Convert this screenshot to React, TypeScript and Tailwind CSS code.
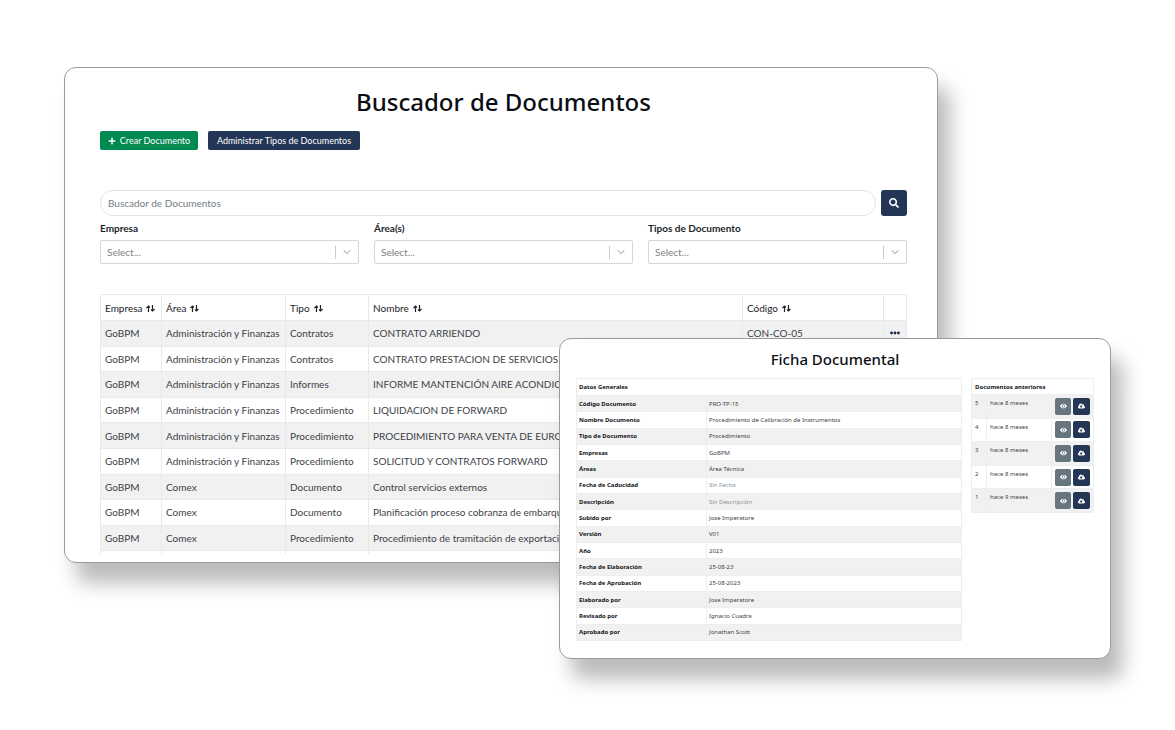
import { useState } from 'react';
import { FaCloudDownloadAlt, FaEllipsisH, FaEye, FaPlus, FaSearch } from 'react-icons/fa';

const filtros = [
  { id: 'empresa', label: 'Empresa' },
  { id: 'areas', label: 'Área(s)' },
  { id: 'tipos', label: 'Tipos de Documento' }
];

const columnas = ['Empresa', 'Área', 'Tipo', 'Nombre', 'Código'];

const documentos = [
  { empresa: 'GoBPM', area: 'Administración y Finanzas', tipo: 'Contratos', nombre: 'CONTRATO ARRIENDO', codigo: 'CON-CO-05' },
  { empresa: 'GoBPM', area: 'Administración y Finanzas', tipo: 'Contratos', nombre: 'CONTRATO PRESTACION DE SERVICIOS CONTABLES', codigo: '' },
  { empresa: 'GoBPM', area: 'Administración y Finanzas', tipo: 'Informes', nombre: 'INFORME MANTENCIÓN AIRE ACONDICIONADO', codigo: '' },
  { empresa: 'GoBPM', area: 'Administración y Finanzas', tipo: 'Procedimiento', nombre: 'LIQUIDACION DE FORWARD', codigo: '' },
  { empresa: 'GoBPM', area: 'Administración y Finanzas', tipo: 'Procedimiento', nombre: 'PROCEDIMIENTO PARA VENTA DE EUROS', codigo: '' },
  { empresa: 'GoBPM', area: 'Administración y Finanzas', tipo: 'Procedimiento', nombre: 'SOLICITUD Y CONTRATOS FORWARD', codigo: '' },
  { empresa: 'GoBPM', area: 'Comex', tipo: 'Documento', nombre: 'Control servicios externos', codigo: '' },
  { empresa: 'GoBPM', area: 'Comex', tipo: 'Documento', nombre: 'Planificación proceso cobranza de embarques', codigo: '' },
  { empresa: 'GoBPM', area: 'Comex', tipo: 'Procedimiento', nombre: 'Procedimiento de tramitación de exportaciones', codigo: '' }
];

const datosGenerales = [
  { campo: 'Código Documento', valor: 'PRO-TP-15' },
  { campo: 'Nombre Documento', valor: 'Procedimiento de Calibración de Instrumentos' },
  { campo: 'Tipo de Documento', valor: 'Procedimiento' },
  { campo: 'Empresas', valor: 'GoBPM' },
  { campo: 'Áreas', valor: 'Área Técnica' },
  { campo: 'Fecha de Caducidad', valor: 'Sin Fecha', vacio: true },
  { campo: 'Descripción', valor: 'Sin Descripción', vacio: true },
  { campo: 'Subido por', valor: 'Jose Imperatore' },
  { campo: 'Versión', valor: 'V01' },
  { campo: 'Año', valor: '2023' },
  { campo: 'Fecha de Elaboración', valor: '25-08-23' },
  { campo: 'Fecha de Aprobación', valor: '25-08-2023' },
  { campo: 'Elaborado por', valor: 'Jose Imperatore' },
  { campo: 'Revisado por', valor: 'Ignacio Cuadra' },
  { campo: 'Aprobado por', valor: 'Jonathan Scott' }
];

const versiones = [
  { numero: 5, fecha: 'hace 8 meses' },
  { numero: 4, fecha: 'hace 8 meses' },
  { numero: 3, fecha: 'hace 8 meses' },
  { numero: 2, fecha: 'hace 8 meses' },
  { numero: 1, fecha: 'hace 9 meses' }
];

function IconoOrden() {
  return (
    <svg viewBox="0 0 18 14" className="mt-px h-[7px] w-[9px] shrink-0" fill="none" stroke="currentColor" strokeWidth="2.4" aria-hidden="true">
      <path d="M5 14V2M1 6l4-4 3 3" />
      <path d="M13 0v12M10 9l3 3 4-4" />
    </svg>
  );
}

function Filtro({ id, label }: { id: string; label: string }) {
  return (
    <div>
      <label htmlFor={id} className="block text-[10px] leading-4 font-bold text-[#212529]">{label}</label>
      <div className="mt-1 flex h-6 items-center rounded-xs border border-[#d5d8da]">
        <select id={id} defaultValue="" className="h-full min-w-0 flex-1 appearance-none bg-transparent px-[6px] text-[10px] text-[#808080] outline-none">
          <option value="">Select...</option>
        </select>
        <span className="h-[13px] w-px bg-[#cccccc]" />
        <svg viewBox="0 0 12 12" className="mx-[6px] h-[10px] w-[10px]" fill="none" stroke="#bbbbbb" strokeWidth="1.5" aria-hidden="true">
          <path d="M2 4l4 4 4-4" />
        </svg>
      </div>
    </div>
  );
}

function Buscador() {
  const [texto, setTexto] = useState('');

  return (
    <main className="mr-[173px] rounded-xl border border-[#9b9b9b] bg-white pt-5 pr-[30px] pb-2 pl-[35px] font-['Lato','Open_Sans',sans-serif] shadow-[12px_20px_20px_rgba(0,0,0,0.27)]">
      <h1 className="text-center font-['Noto_Sans',sans-serif] text-[24px] leading-7 font-medium text-[#0b0f14]">Buscador de Documentos</h1>

      <div className="mt-[15px] flex gap-[10px]">
        <button type="button" className="flex h-[19px] w-[98px] items-center justify-center gap-1 rounded-xs bg-[#008a52] text-[9px] text-white">
          <FaPlus className="h-2 w-2" />
          Crear Documento
        </button>
        <button type="button" className="h-[19px] w-[152px] rounded-xs bg-[#233655] text-[9px] text-white">
          Administrar Tipos de Documentos
        </button>
      </div>

      <form className="mt-10 flex gap-[5px]" onSubmit={e => e.preventDefault()}>
        <input
          type="text"
          aria-label="Buscador de Documentos"
          placeholder="Buscador de Documentos"
          value={texto}
          onChange={e => setTexto(e.target.value)}
          className="h-[26px] min-w-0 flex-1 rounded-full border border-[#dfe3e6] px-[7px] text-[10px] text-[#212529] outline-none placeholder:text-[#747c83]"
        />
        <button type="submit" aria-label="Buscar" className="flex h-[26px] w-[26px] items-center justify-center rounded-[3px] bg-[#233655] text-white">
          <FaSearch className="h-[10px] w-[10px]" />
        </button>
      </form>

      <div className="mt-1 grid grid-cols-3 gap-[15px]">
        {filtros.map(f => (
          <Filtro key={f.id} id={f.id} label={f.label} />
        ))}
      </div>

      <div className="mt-[30px] h-[260px] overflow-hidden">
        <table className="h-[283px] w-full table-fixed border-collapse text-left text-[10px] leading-4 text-[#3c4248]">
          <colgroup>
            <col className="w-[61px]" />
            <col className="w-[124px]" />
            <col className="w-[83px]" />
            <col />
            <col className="w-[141px]" />
            <col className="w-[23px]" />
          </colgroup>
          <thead>
            <tr>
              {columnas.map(c => (
                <th key={c} className="h-[26px] border border-[#e6eaec] px-1 font-normal text-[#212529]">
                  <span className="flex items-center gap-1">
                    {c}
                    <IconoOrden />
                  </span>
                </th>
              ))}
              <th className="border border-[#e6eaec]" />
            </tr>
          </thead>
          <tbody>
            {documentos.map(d => (
              <tr key={d.nombre} className="h-[25px] odd:bg-[#f1f1f1]">
                <td className="border border-[#e6eaec] px-1">{d.empresa}</td>
                <td className="border border-[#e6eaec] px-1 whitespace-nowrap">{d.area}</td>
                <td className="border border-[#e6eaec] px-1">{d.tipo}</td>
                <td className="border border-[#e6eaec] px-1 whitespace-nowrap">{d.nombre}</td>
                <td className="border border-[#e6eaec] px-1">{d.codigo}</td>
                <td className="border border-[#e6eaec]">
                  <button type="button" aria-label="Opciones" className="mx-auto block text-[#1b2c4a]">
                    <FaEllipsisH className="h-[10px] w-[10px]" />
                  </button>
                </td>
              </tr>
            ))}
            <tr className="h-[25px]">
              {[...columnas, 'Opciones'].map(c => (
                <td key={c} className="border border-[#e6eaec]" />
              ))}
            </tr>
          </tbody>
        </table>
      </div>
    </main>
  );
}

function Ficha() {
  return (
    <section className="absolute top-[338px] right-16 w-[552px] rounded-xl border border-[#9b9b9b] bg-white px-4 pt-2 pb-[17px] shadow-[12px_20px_20px_rgba(0,0,0,0.27)]">
      <h2 className="text-center text-[15px] leading-6 font-medium text-[#0b0f14]">Ficha Documental</h2>

      <div className="mt-[7px] flex items-start gap-[9px]">
        <table className="h-[263px] flex-1 table-fixed border-collapse text-left text-[6px] leading-2 text-[#3c4248]">
          <colgroup>
            <col className="w-[130px]" />
            <col />
          </colgroup>
          <thead>
            <tr>
              <th colSpan={2} className="h-[17px] border border-[#eceff0] px-[2px] font-bold text-[#101418]">Datos Generales</th>
            </tr>
          </thead>
          <tbody>
            {datosGenerales.map(d => (
              <tr key={d.campo} className="h-4 odd:bg-[#f1f1f1]">
                <th scope="row" className="border border-[#eceff0] px-[2px] font-bold text-[#101418]">{d.campo}</th>
                <td className={`border border-[#eceff0] px-[2px] ${d.vacio ? 'text-[#8a9298]' : ''}`}>{d.valor}</td>
              </tr>
            ))}
          </tbody>
        </table>

        <table className="h-[135px] w-[123px] table-fixed border-collapse text-left text-[6px] leading-2 text-[#3c4248]">
          <colgroup>
            <col className="w-[15px]" />
            <col />
            <col className="w-[42px]" />
          </colgroup>
          <thead>
            <tr>
              <th colSpan={3} className="h-4 border border-[#eceff0] px-[3px] font-bold text-[#101418]">Documentos anteriores</th>
            </tr>
          </thead>
          <tbody>
            {versiones.map(v => (
              <tr key={v.numero} className="odd:bg-[#f1f1f1]">
                <td className="border border-[#eceff0] px-[3px] pt-1 align-top">{v.numero}</td>
                <td className="border border-[#eceff0] px-[3px] pt-1 align-top">{v.fecha}</td>
                <td className="border border-[#eceff0] px-[3px]">
                  <div className="flex gap-[2px]">
                    <button type="button" aria-label="Ver" className="flex h-[17px] w-[17px] items-center justify-center rounded-xs bg-[#67757e] text-white">
                      <FaEye className="h-[6px] w-[7px]" />
                    </button>
                    <button type="button" aria-label="Descargar" className="flex h-[17px] w-[17px] items-center justify-center rounded-xs bg-[#233655] text-white">
                      <FaCloudDownloadAlt className="h-[6px] w-[7px]" />
                    </button>
                  </div>
                </td>
              </tr>
            ))}
          </tbody>
        </table>
      </div>
    </section>
  );
}

export default function App() {
  return (
    <div className="relative min-h-screen bg-white px-16 pt-[67px] pb-16 font-['Segoe_UI','Noto_Sans','Open_Sans',sans-serif]">
      <Buscador />
      <Ficha />
    </div>
  );
}
